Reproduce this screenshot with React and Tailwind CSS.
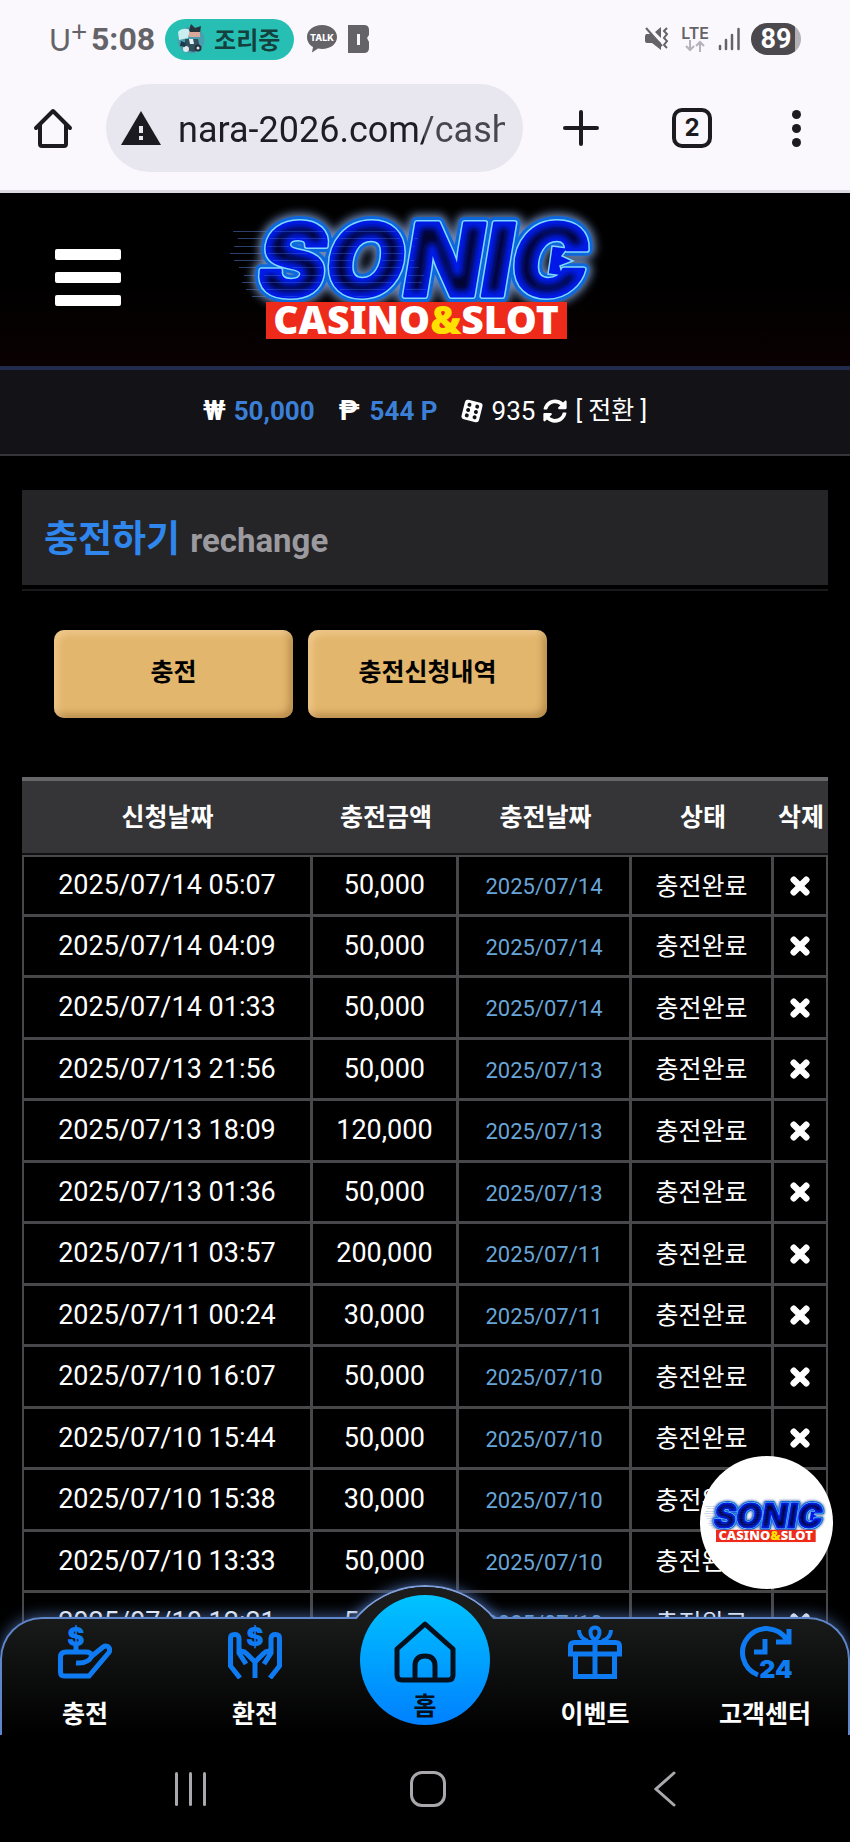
import { useId } from 'react';
import { FaSyncAlt, FaTimes } from 'react-icons/fa';

const rows = [
  ['2025/07/14 05:07', '50,000'],
  ['2025/07/14 04:09', '50,000'],
  ['2025/07/14 01:33', '50,000'],
  ['2025/07/13 21:56', '50,000'],
  ['2025/07/13 18:09', '120,000'],
  ['2025/07/13 01:36', '50,000'],
  ['2025/07/11 03:57', '200,000'],
  ['2025/07/11 00:24', '30,000'],
  ['2025/07/10 16:07', '50,000'],
  ['2025/07/10 15:44', '50,000'],
  ['2025/07/10 15:38', '30,000'],
  ['2025/07/10 13:33', '50,000'],
  ['2025/07/10 12:21', '50,000'],
];

function Logo({ className }) {
  const id = useId();
  const word = '#' + id + 'w';
  const lines = [
    [3, 31, 60], [8, 38, 62], [4, 46, 60], [0, 53, 58], [4, 60, 58],
    [9, 67, 60], [14, 75, 56], [12, 82, 44], [16, 89, 44], [22, 96, 50],
  ];
  return (
    <svg viewBox="0 0 380 160" className={className} role="img" aria-label="SONIC CASINO&SLOT">
      <defs>
        <text
          id={id + 'w'}
          x="193"
          y="96"
          textAnchor="middle"
          fontFamily='Inter, "Liberation Sans", sans-serif'
          fontWeight="900"
          fontStyle="italic"
          fontSize="101"
          strokeLinejoin="round"
        >
          SONIC
        </text>
        <clipPath id={id + 'c'}>
          <use href={word} />
        </clipPath>
        <filter id={id + 'g'} x="-20%" y="-30%" width="140%" height="160%">
          <feGaussianBlur stdDeviation="4" />
        </filter>
        <filter id={id + 'i'} x="-10%" y="-10%" width="120%" height="120%">
          <feGaussianBlur stdDeviation="3" />
        </filter>
      </defs>
      {lines.map(([x, y, w]) => (
        <rect key={y} x={x} y={y} width={w} height="1" fill="#3a5a9c" opacity="0.7" />
      ))}
      <use href={word} fill="#6d86b4" stroke="#6d86b4" strokeWidth="17" filter={`url(#${id}g)`} />
      <use href={word} fill="#0c68dc" stroke="#0c68dc" strokeWidth="12" />
      <use href={word} fill="#7fd8ff" stroke="#7fd8ff" strokeWidth="6" />
      <path d="M322 46L338 48 332 56 343 61 330 66 333 76 318 74z" fill="#0018e8" stroke="#7fd8ff" strokeWidth="1.500" />
      <use href={word} fill="#0018e8" stroke="#0018e8" strokeWidth="3" />
      <g clipPath={`url(#${id}c)`}>
        <use href={word} fill="#02052e" />
        <use href={word} fill="none" stroke="#001cf0" strokeWidth="10" filter={`url(#${id}i)`} />
        {lines.map(([x, y]) => (
          <rect key={y} x={x + 20} y={y} width="160" height="1" fill="#3f7cf0" opacity="0.35" />
        ))}
      </g>
      <rect x="36" y="102" width="301" height="37" fill="#ee2a1b" />
      <text x="186" y="134" textAnchor="middle" fontFamily='"Noto Sans", "Open Sans", sans-serif' fontWeight="900" fontSize="39" fill="#fff">
        CASINO<tspan fill="#ffe000">&amp;</tspan>SLOT
      </text>
    </svg>
  );
}

function StatusBar() {
  return (
    <div className="flex h-20 items-center bg-[#faf8fd] pr-[49px] pb-[2px] pl-[49px] text-[#646368]">
      <span className="flex w-[42px] font-['Lato',sans-serif] text-[30px] leading-8">
        U<sup className="-top-2 text-[28px] leading-8">+</sup>
      </span>
      <span className="font-['Roboto',sans-serif] text-[32px] leading-8 font-bold">5:08</span>
      <div className="ml-[10px] flex h-[41px] w-[129px] items-center gap-[9px] rounded-full bg-[#27bfb3] pl-3">
        <svg viewBox="0 0 28 30" className="h-[30px] w-7">
          <circle cx="14" cy="16" r="13.5" fill="#4a9fae" />
          <path d="M1 8c3-4 8-4 12-2l-2 8-9 2z" fill="#c9eef0" />
          <path d="M12 6l2-6 4 4 6-2-1 7-9 1z" fill="#26343c" />
          <path d="M12 8h11v5H12z" fill="#d8a99a" />
          <path d="M8 15h13l2 9-6 4-9-2z" fill="#33505f" />
          <path d="M12 15h4l1 5h-4z" fill="#e8f2f5" />
          <circle cx="9" cy="25" r="3" fill="#dfe9ee" />
          <circle cx="21" cy="24" r="3.5" fill="#27313b" />
          <circle cx="21" cy="24" r="1.5" fill="#dfe9ee" />
          <path d="M4 17l5 2-1 4-5-1z" fill="#1e3b49" />
        </svg>
        <span className="font-['Noto_Sans_CJK_KR',sans-serif] text-2xl leading-8 font-bold text-[#14403e]">조리중</span>
      </div>
      <svg viewBox="0 0 30 28" className="ml-[13px] h-7 w-[30px]" aria-label="TALK">
        <path d="M15 0C6.500 0 0 5 0 12c0 4.500 2.500 8 6 10l-1 5.500 6-4 4 .5c8.500 0 15-5 15-12S23.500 0 15 0z" fill="#646368" />
        <text x="15" y="16" textAnchor="middle" fontFamily="Inter, sans-serif" fontWeight="800" fontSize="9" fill="#fff">TALK</text>
      </svg>
      <svg viewBox="0 0 22 28" className="ml-[11px] h-7 w-[22px]">
        <path d="M0 0h16q5 0 5 5v5l-2 3 2 4v6q0 5-5 5H0z" fill="#646368" />
        <rect x="9" y="9" width="3" height="11" fill="#faf8fd" />
      </svg>
      <div className="ml-auto flex items-center">
        <svg viewBox="0 0 24 24" className="h-6 w-6" fill="#646368">
          <path d="M0 9l1-2h5L16 16v7l-9-7H2q-2 0-2-2zM10 5l6-5v11z" />
          <path d="M1 1l16 18" stroke="#646368" strokeWidth="2" />
          <path d="M22 1l-3 3 3 3-3 4 3 3-3 4 3 3" fill="none" stroke="#646368" strokeWidth="2" />
        </svg>
        <div className="ml-3 flex flex-col items-center">
          <span className="font-['Inter',sans-serif] text-base leading-[14px] font-semibold">LTE</span>
          <svg viewBox="0 0 20 12" className="h-3 w-5" fill="none" stroke="#b5b3b9" strokeWidth="2">
            <path d="M5 0v10M1 6l4 4 4-4M15 12V2M11 6l4-4 4 4" />
          </svg>
        </div>
        <svg viewBox="0 0 22 24" className="ml-[9px] h-6 w-[22px]" stroke="#646368" strokeWidth="2.500" strokeLinecap="round">
          <path d="M2 19v3M8 13v9M14 8v14" />
          <path d="M20.500 2v20" />
        </svg>
        <div className="ml-[11px] flex h-8 w-[50px] items-center justify-center rounded-full bg-[linear-gradient(90deg,#4b494e_88%,#b3b1b6_88%)] font-['Roboto',sans-serif] text-[27px] leading-8 font-bold text-white">89</div>
      </div>
    </div>
  );
}

function BrowserBar() {
  return (
    <div className="flex h-[113px] items-start border-b-3 border-[#dcdbe2] bg-[#faf8fd] pt-1 pr-[48px] pl-[33px] text-[#1c1b20]">
      <button aria-label="Home" className="mt-6 h-10 w-10">
        <svg viewBox="0 0 40 40" className="h-10 w-10" fill="none" stroke="currentColor" strokeWidth="4" strokeLinecap="round" strokeLinejoin="round">
          <path d="M3 20L20 3l17 17M7 17v19q0 2 2 2h22q2 0 2-2V17" />
        </svg>
      </button>
      <div className="ml-[33px] flex h-[88px] min-w-0 flex-1 items-center rounded-full bg-[#e8e6ef] pr-[18px] pl-[15px]">
        <svg viewBox="0 0 40 34" className="h-[34px] w-10 shrink-0">
          <path d="M20 0l20 34H0z" fill="#1c1b20" />
          <path d="M18 15h4v7h-4zM18 25h4v4h-4z" fill="#e8e6ef" />
        </svg>
        <input
          aria-label="Address"
          readOnly
          value="nara-2026.com/cash"
          className="ml-[17px] w-full min-w-0 flex-1 bg-[linear-gradient(90deg,#1e1d26_246px,#474650_246px)] bg-clip-text pt-1 font-['Roboto',sans-serif] text-4xl text-transparent outline-none"
        />
      </div>
      <div className="ml-10 flex h-[88px] items-center">
        <button aria-label="New tab" className="h-9 w-9">
          <svg viewBox="0 0 36 36" className="h-9 w-9" stroke="currentColor" strokeWidth="4" strokeLinecap="round">
            <path d="M18 2v32M2 18h32" />
          </svg>
        </button>
        <button aria-label="Tabs" className="ml-[73px] flex h-10 w-10 items-center justify-center rounded-[10px] border-4 border-current font-['Inter',sans-serif] text-2xl leading-6 font-bold">2</button>
        <button aria-label="Menu" className="ml-[80px] flex w-[10px] flex-col gap-[5px]">
          <span className="h-[9px] w-[9px] rounded-full bg-current" />
          <span className="h-[9px] w-[9px] rounded-full bg-current" />
          <span className="h-[9px] w-[9px] rounded-full bg-current" />
        </button>
      </div>
    </div>
  );
}

function ChargeIcon() {
  return (
    <svg viewBox="0 0 54 54" className="h-[54px] w-[54px]" fill="none" stroke="#0f7bf2" strokeWidth="5">
      <text x="18" y="21" textAnchor="middle" fontFamily="Inter, sans-serif" fontSize="26" fontWeight="900" fill="#0f7bf2" stroke="none">$</text>
      <path d="M18 20v7M8 27h20q5 0 6 4l11-9q3-2 5.500 0 2.500 3 0 6L31 51H6q-3.500 0-3.500-4V32q0-5 5.500-5zM18 38q12 1 16-7" />
    </svg>
  );
}

function WithdrawIcon() {
  return (
    <svg viewBox="0 0 58 54" className="h-[54px] w-[58px]" fill="none" stroke="#0f7bf2" strokeWidth="5">
      <text x="29" y="21" textAnchor="middle" fontFamily="Inter, sans-serif" fontSize="26" fontWeight="900" fill="#0f7bf2" stroke="none">$</text>
      <path d="M14 53L4.500 41V13q0-3.500 4-3.500T13 13v15l7 11M13 27q4-2 8 2l8 8v16" />
      <path d="M44 53l9.500-12V13q0-3.500-4-3.500T45 13v15l-7 11M45 27q-4-2-8 2l-8 8" />
    </svg>
  );
}

function GiftIcon() {
  return (
    <svg viewBox="0 0 54 54" className="h-[54px] w-[54px]" fill="none" stroke="#0f7bf2" strokeWidth="5">
      <path d="M27 15c-6-4-6-12.500 0-12.500s6 8.500 0 12.500zM11 5q0 8 9 11M43 5q0 8-9 11" strokeWidth="4" />
      <path d="M2.500 29V21q0-3.500 4-3.500h41q4 0 4 3.500v8zM7.500 29v22.500h39V29M27 15v37" />
    </svg>
  );
}

function CenterIcon() {
  return (
    <svg viewBox="0 0 54 54" className="h-[54px] w-[54px]" fill="none" stroke="#0f7bf2" strokeWidth="5">
      <path d="M20 50A24 24 0 1 1 49 15M51 4v13H38M27 14v13H16" />
      <text x="38" y="53" textAnchor="middle" fontFamily="Inter, sans-serif" fontSize="25" fontWeight="900" fill="#0f7bf2" stroke="none">24</text>
    </svg>
  );
}

function NavItem({ icon, label }) {
  return (
    <a href="#" className="flex flex-col items-center gap-[18px] pt-2">
      {icon}
      <span className="text-[25px] leading-[30px] font-bold whitespace-nowrap">{label}</span>
    </a>
  );
}

function BottomNav() {
  return (
    <nav className="absolute inset-x-0 bottom-0 font-['Noto_Sans_CJK_KR',sans-serif] text-white">
      <div className="absolute -top-8 left-1/2 h-[151px] w-[200px] -translate-x-1/2">
        <div className="mx-auto h-[182px] w-[182px] rounded-full border-2 border-[#7f9fdc] shadow-[0_0_14px_#4a6fb5] [clip-path:inset(-20px_-20px_148px_-20px)]" />
      </div>
      <div className="relative h-[118px] rounded-t-[42px] border-2 border-b-0 border-[#5f86cc] bg-[linear-gradient(#191a1a,#000)] shadow-[0_-2px_14px_rgba(90,130,200,0.6)]" />
      <div className="absolute -top-[30px] left-1/2 h-[148px] w-[178px] -translate-x-1/2 overflow-hidden">
        <div className="h-[178px] rounded-full bg-[linear-gradient(#1c1c1c,#191a1a_32px,#000_148px)]" />
      </div>
      <div className="absolute inset-0 grid grid-cols-5">
        <NavItem icon={<ChargeIcon />} label="충전" />
        <NavItem icon={<WithdrawIcon />} label="환전" />
        <a href="#" className="-mt-[22px] flex h-[130px] w-[130px] flex-col items-center justify-self-center rounded-full bg-[linear-gradient(#00c3ff,#0080ff)] pt-[26px] text-[#06101c]">
          <svg viewBox="0 0 62 62" className="h-[62px] w-[62px]" fill="none" stroke="currentColor" strokeWidth="5" strokeLinejoin="round">
            <path d="M31 3L59 28v26q0 5-5 5H8q-5 0-5-5V28zM21 59V45q0-10 10-10t10 10v14" />
          </svg>
          <span className="mt-[6px] text-[25px] leading-[30px] font-bold">홈</span>
        </a>
        <NavItem icon={<GiftIcon />} label="이벤트" />
        <NavItem icon={<CenterIcon />} label="고객센터" />
      </div>
    </nav>
  );
}

function SystemNav() {
  return (
    <div className="relative z-10 grid h-[107px] shrink-0 grid-cols-3 items-center bg-black pr-[66px] pl-[72px] text-[#aaa8ad]">
      <button aria-label="Recent apps" className="flex gap-[11px] justify-self-center">
        <span className="h-[34px] w-[3px] rounded bg-current" />
        <span className="h-[34px] w-[3px] rounded bg-current" />
        <span className="h-[34px] w-[3px] rounded bg-current" />
      </button>
      <button aria-label="Home screen" className="h-9 w-9 justify-self-center rounded-xl border-3 border-current" />
      <button aria-label="Back" className="justify-self-center">
        <svg viewBox="0 0 22 36" className="h-9 w-[22px]" fill="none" stroke="currentColor" strokeWidth="3" strokeLinecap="round">
          <path d="M20 2L2 18l18 16" />
        </svg>
      </button>
    </div>
  );
}

const goldButton =
  "h-[88px] w-[239px] rounded-[10px] bg-[#e3b66d] pb-[2px] text-[25px] font-bold text-black shadow-[inset_4px_4px_7px_rgba(255,225,180,0.45),inset_-4px_-4px_7px_rgba(130,90,35,0.45)]";
const cell = 'border-r-3 border-b-3 border-[#48474a] p-0 align-middle first:border-l-2 last:border-r-2';

export default function App() {
  return (
    <div className="flex h-screen flex-col overflow-hidden bg-black font-['Roboto','Noto_Sans_CJK_KR',sans-serif] text-white">
      <div className="shrink-0">
        <StatusBar />
        <BrowserBar />
      </div>
      <div className="relative min-h-0 flex-1">
        <div className="h-full overflow-y-auto [scrollbar-width:none]">
          <header className="relative flex h-[177px] items-start justify-center border-b-4 border-[#232b4c] bg-[linear-gradient(#000,#000_50%,#0a0101)]">
            <button aria-label="Menu" className="absolute top-14 left-[55px] flex w-[66px] flex-col gap-3">
              <span className="h-[11px] rounded-[2px] bg-white" />
              <span className="h-[11px] rounded-[2px] bg-white" />
              <span className="h-[11px] rounded-[2px] bg-white" />
            </button>
            <a href="#" className="mt-[7px] mr-[10px]">
              <Logo className="h-40 w-[380px]" />
            </a>
          </header>
          <div className="flex h-[86px] items-center justify-center border-b-2 border-[#353437] bg-[#131216] pb-[2px] text-[26px] leading-8">
            <b className="text-[28px]">₩</b>
            <b className="ml-2 text-[#3b80d6]">50,000</b>
            <b className="ml-6 text-[28px]">₱</b>
            <b className="ml-[10px] text-[#3b80d6]">544 P</b>
            <svg viewBox="0 0 24 24" className="ml-[22px] h-6 w-6">
              <g transform="rotate(14 12 12)">
                <rect x="3" y="2" width="18" height="20" rx="3" fill="#fff" />
                <g fill="#131216">
                  <circle cx="8" cy="6.500" r="2" /><circle cx="16" cy="6.500" r="2" />
                  <circle cx="8" cy="12" r="2" /><circle cx="16" cy="12" r="2" />
                  <circle cx="8" cy="17.500" r="2" /><circle cx="16" cy="17.500" r="2" />
                </g>
              </g>
            </svg>
            <span className="ml-2">935</span>
            <button className="ml-2 flex items-center gap-2">
              <FaSyncAlt className="h-6 w-6" />
              <span className="text-[25px]">[ 전환 ]</span>
            </button>
          </div>
          <main className="px-[22px] pt-[34px]">
            <div className="border-b-2 border-[#19181b] pb-1">
              <h1 className="flex h-[95px] items-center gap-[10px] bg-[#252427] pl-[22px] font-bold">
                <span className="pt-1 text-[37px] text-[#2f86ec]">충전하기</span>
                <span className="pt-[6px] text-[33px] text-[#9b9a9f]">rechange</span>
              </h1>
            </div>
            <div className="flex gap-[15px] pt-[39px] pl-8">
              <button className={goldButton}>충전</button>
              <button className={goldButton}>충전신청내역</button>
            </div>
            <table className="mt-[59px] w-full table-fixed border-separate border-spacing-0 text-center">
              <colgroup>
                <col className="w-[36.1%]" />
                <col className="w-[18.1%]" />
                <col className="w-[21.5%]" />
                <col className="w-[17.6%]" />
                <col className="w-[6.7%]" />
              </colgroup>
              <thead>
                <tr className="h-[78px] text-[25px] leading-8 whitespace-nowrap">
                  {['신청날짜', '충전금액', '충전날짜', '상태', '삭제'].map((h) => (
                    <th key={h} className="border-t-4 border-b-2 border-t-[#666568] border-b-[#111012] bg-[#353437] p-0 pt-[2px] font-bold">{h}</th>
                  ))}
                </tr>
              </thead>
              <tbody>
                {rows.map(([date, amount]) => (
                  <tr key={date} className="h-[61px] odd:h-[62px] [&:first-child>td]:border-t-2">
                    <td className={cell + ' text-[27px]'}>{date}</td>
                    <td className={cell + ' text-[27px]'}>{amount}</td>
                    <td className={cell + ' pt-[2px] text-[22px] text-[#68a5d8]'}>{date.slice(0, 10)}</td>
                    <td className={cell + ' pt-[2px] text-[25px] leading-8'}>충전완료</td>
                    <td className={cell}>
                      <button aria-label="삭제" className="block w-full">
                        <FaTimes className="mx-auto h-[26px] w-[18px] overflow-visible stroke-current stroke-[30px]" />
                      </button>
                    </td>
                  </tr>
                ))}
              </tbody>
            </table>
          </main>
        </div>
        <a href="#" className="absolute right-[17px] bottom-[146px] flex h-[133px] w-[133px] items-center justify-center rounded-full bg-white">
          <Logo className="h-[53px] w-[126px]" />
        </a>
        <BottomNav />
      </div>
      <SystemNav />
    </div>
  );
}
